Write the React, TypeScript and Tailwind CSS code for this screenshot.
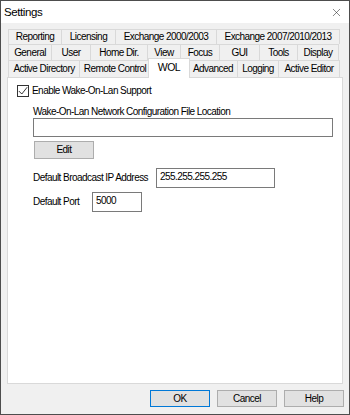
import { X } from "lucide-react"

type Tab = { label: string; w: number; active?: boolean }

const rows: { h: number; tabs: Tab[] }[] = [
	{
		h: 15,
		tabs: [
			{ label: "Reporting", w: 53 },
			{ label: "Licensing", w: 54 },
			{ label: "Exchange 2000/2003", w: 101 },
			{ label: "Exchange 2007/2010/2013", w: 124 },
		],
	},
	{
		h: 16,
		tabs: [
			{ label: "General", w: 43 },
			{ label: "User", w: 39 },
			{ label: "Home Dir.", w: 57 },
			{ label: "View", w: 33 },
			{ label: "Focus", w: 39 },
			{ label: "GUI", w: 40 },
			{ label: "Tools", w: 38 },
			{ label: "Display", w: 42 },
		],
	},
	{
		h: 17,
		tabs: [
			{ label: "Active Directory", w: 71 },
			{ label: "Remote Control", w: 71 },
			{ label: "WOL", w: 38, active: true },
			{ label: "Advanced", w: 49 },
			{ label: "Logging", w: 41 },
			{ label: "Active Editor", w: 62 },
		],
	},
]

const TabRow = ({ h, tabs }: { h: number; tabs: Tab[] }) => (
	<div className="flex ml-[1px]" style={{ height: h }}>
		{tabs.map((t, i) =>
			t.active ? (
				<div
					key={t.label}
					className="relative z-10 -mt-[2px] -mx-[2px] h-[20px] flex items-start justify-center pt-[2px] bg-white border-t border-l border-r border-[#d9d9d9] text-[10.5px]"
					style={{ width: t.w + 4 }}>
					{t.label}
				</div>
			) : (
				<div
					key={t.label}
					className={
						"h-full flex items-center justify-center bg-[#f0f0f0] border-t border-l border-[#d9d9d9] " +
						(i === tabs.length - 1 ? "border-r" : "")
					}
					style={{ width: t.w }}>
					{t.label}
				</div>
			)
		)}
	</div>
)

const Field = ({ value, className }: { value?: string; className: string }) => (
	<div className={"bg-white border border-[#7a7a7a] px-[3px] pt-[2px] leading-[12px] " + className}>
		{value}
	</div>
)

const Btn = ({ label, focus }: { label: string; focus?: boolean }) => (
	<div
		className={
			"w-[60px] h-[17px] flex items-center justify-center bg-[#e1e1e1] border " +
			(focus ? "border-[#0078d7]" : "border-[#adadad]")
		}>
		{label}
	</div>
)

export default function App() {
	return (
		<div className="w-[350px] h-[415px] flex flex-col bg-[#f0f0f0] border border-[#4d4d4d] font-['Liberation_Sans',Arial,sans-serif] text-[10px] tracking-[-0.55px] text-black leading-[12px]">
			{/* Title bar */}
			<div className="h-[22px] bg-white flex items-center justify-between pl-[3px] pr-[6px]">
				<span className="text-[11.5px] tracking-[-0.4px]">Settings</span>
				<X size={13} strokeWidth={1} className="text-[#222]" />
			</div>

			{/* Body */}
			<div className="flex-1 flex flex-col px-[6px] pt-[6px]">
				{rows.map((r, i) => (
					<TabRow key={i} h={r.h} tabs={r.tabs} />
				))}

				{/* WOL page */}
				<div className="flex-1 bg-white border border-[#d9d9d9] flex flex-col pl-[9px]">
					<div className="flex items-center mt-[7px] h-[12px]">
						<div className="w-[12px] h-[12px] border border-[#333] bg-white flex items-center justify-center">
							<svg width="10" height="10" viewBox="0 0 10 10">
								<polyline points="0.8,5 3.8,8 9.2,1.2" fill="none" stroke="#222" strokeWidth="0.9" />
							</svg>
						</div>
						<span className="ml-[3px]">Enable Wake-On-Lan Support</span>
					</div>

					<div className="ml-[16px] flex flex-col">
						<span className="mt-[9px]">Wake-On-Lan Network Configuration File Location</span>
						<Field className="w-[300px] h-[19px]" />
						<div className="mt-[4px] ml-[1px] w-[60px] h-[18px] flex items-center justify-center bg-[#e1e1e1] border border-[#adadad]">
							Edit
						</div>

						<div className="flex items-center mt-[9px]">
							<span className="w-[123px]">Default Broadcast IP Address</span>
							<Field value="255.255.255.255" className="w-[119px] h-[20px]" />
						</div>
						<div className="flex items-center mt-[4px]">
							<span className="w-[59px]">Default Port</span>
							<Field value="5000" className="w-[50px] h-[20px]" />
						</div>
					</div>
				</div>
			</div>

			{/* Footer */}
			<div className="h-[30px] flex items-start justify-end gap-[7px] pt-[6px] pr-[5px]">
				<Btn label="OK" focus />
				<Btn label="Cancel" />
				<Btn label="Help" />
			</div>
		</div>
	)
}
